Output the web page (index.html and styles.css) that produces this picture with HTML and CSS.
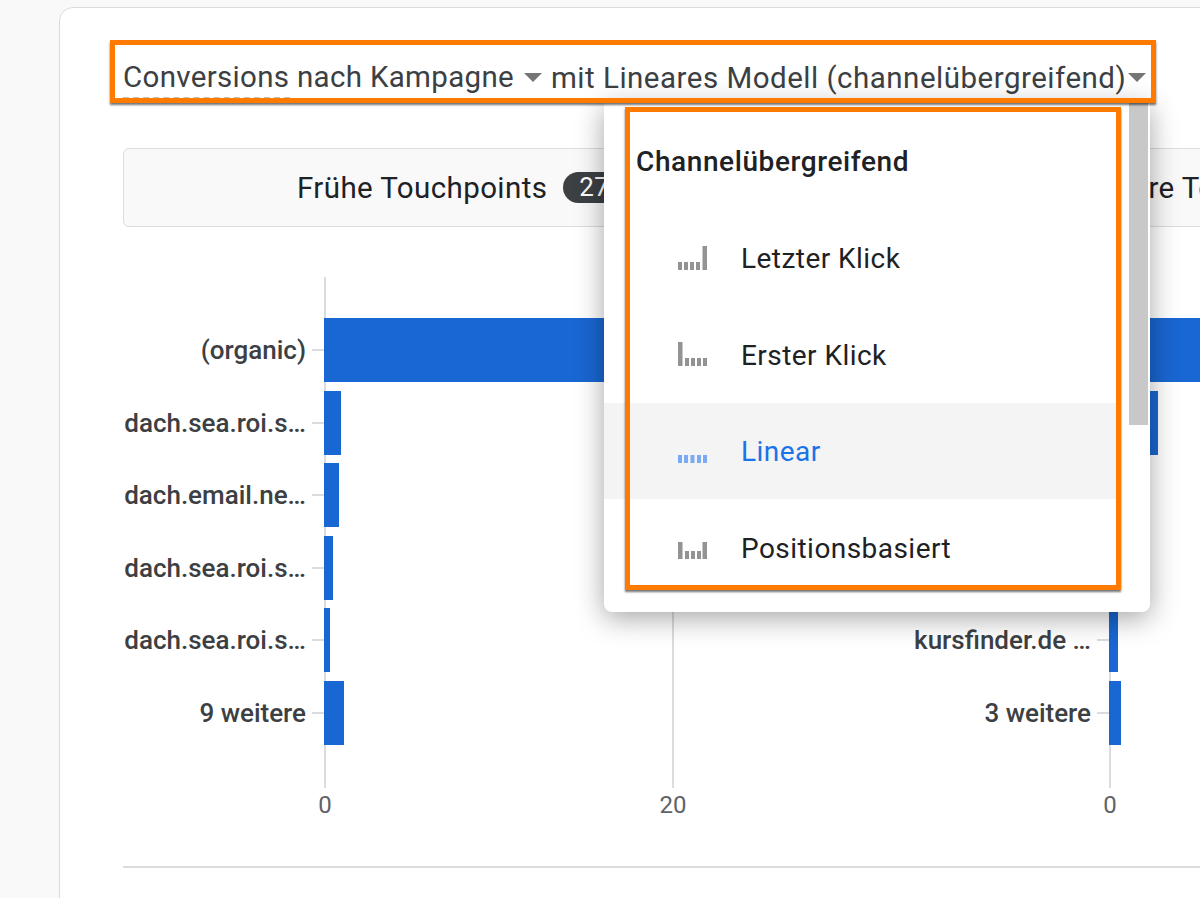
FILE: index.html
```html
<!DOCTYPE html>
<html lang="de">

<head>
    <meta charset="UTF-8">
    <meta name="viewport" content="width=device-width, initial-scale=1.0">
    <title>Conversions nach Kampagne</title>
    <link rel="stylesheet" href="styles.css">
</head>

<body>
    <div class="card">
        <div class="card-title">
            <span class="title-dim">Conversions nach Kampagne</span>
            <span class="caret"></span>
            <span class="title-model">mit Lineares Modell (channelübergreifend)</span>
            <span class="caret caret-end"></span>
        </div>

        <div class="segments">
            <div class="segment">
                <span>Frühe Touchpoints</span>
                <span class="badge">27 %</span>
            </div>
            <div class="segment segment-late">
                <span>Spätere Touchpoints</span>
            </div>
        </div>

        <div class="charts">
            <div class="chart">
                <div class="gridline" style="left: 201px"><span class="axis-label">0</span></div>
                <div class="gridline" style="left: 549px"><span class="axis-label">20</span></div>
                <div class="row"><span class="row-label">(organic)</span><span class="row-tick"></span><span class="bar" style="width: 500px"></span></div>
                <div class="row"><span class="row-label">dach.sea.roi.s…</span><span class="row-tick"></span><span class="bar" style="width: 17px"></span></div>
                <div class="row"><span class="row-label">dach.email.ne…</span><span class="row-tick"></span><span class="bar" style="width: 15px"></span></div>
                <div class="row"><span class="row-label">dach.sea.roi.s…</span><span class="row-tick"></span><span class="bar" style="width: 9px"></span></div>
                <div class="row"><span class="row-label">dach.sea.roi.s…</span><span class="row-tick"></span><span class="bar" style="width: 6px"></span></div>
                <div class="row"><span class="row-label">9 weitere</span><span class="row-tick"></span><span class="bar" style="width: 20px"></span></div>
            </div>
            <div class="chart">
                <div class="gridline" style="left: 201px"><span class="axis-label">0</span></div>
                <div class="row"><span class="row-label"></span><span class="row-tick"></span><span class="bar" style="width: 300px"></span></div>
                <div class="row"><span class="row-label"></span><span class="row-tick"></span><span class="bar" style="width: 49px"></span></div>
                <div class="row"><span class="row-label"></span><span class="row-tick"></span><span class="bar" style="width: 20px"></span></div>
                <div class="row"><span class="row-label"></span><span class="row-tick"></span><span class="bar" style="width: 12px"></span></div>
                <div class="row"><span class="row-label">kursfinder.de …</span><span class="row-tick"></span><span class="bar" style="width: 9px"></span></div>
                <div class="row"><span class="row-label">3 weitere</span><span class="row-tick"></span><span class="bar" style="width: 12px"></span></div>
            </div>
        </div>

        <div class="divider"></div>

        <!-- Model dropdown -->
        <div class="menu">
            <div class="menu-heading">Channelübergreifend</div>
            <div class="menu-item">
                <svg class="model-icon" viewBox="0 0 29 24"><rect x="0" y="16" width="4" height="8"/><rect x="6" y="16" width="4" height="8"/><rect x="12" y="16" width="4" height="8"/><rect x="18" y="16" width="4" height="8"/><rect x="24.5" y="0" width="4.5" height="24"/></svg>
                <span>Letzter Klick</span>
            </div>
            <div class="menu-item">
                <svg class="model-icon" viewBox="0 0 29 24"><rect x="0" y="0" width="4.5" height="24"/><rect x="7" y="16" width="4" height="8"/><rect x="13" y="16" width="4" height="8"/><rect x="19" y="16" width="4" height="8"/><rect x="25" y="16" width="4" height="8"/></svg>
                <span>Erster Klick</span>
            </div>
            <div class="menu-item menu-item-active">
                <svg class="model-icon" viewBox="0 0 29 24"><rect x="0" y="16" width="4" height="8"/><rect x="6" y="16" width="4" height="8"/><rect x="12.5" y="16" width="4" height="8"/><rect x="19" y="16" width="4" height="8"/><rect x="25" y="16" width="4" height="8"/></svg>
                <span>Linear</span>
            </div>
            <div class="menu-item">
                <svg class="model-icon" viewBox="0 0 29 24"><rect x="0" y="7" width="4.5" height="17"/><rect x="7" y="16" width="4" height="8"/><rect x="13" y="16" width="4" height="8"/><rect x="19" y="16" width="4" height="8"/><rect x="24.5" y="7" width="4.5" height="17"/></svg>
                <span>Positionsbasiert</span>
            </div>
            <div class="menu-scrollbar"></div>
        </div>

        <!-- Highlight boxes -->
        <div class="highlight highlight-title"></div>
        <div class="highlight highlight-menu"></div>
    </div>
</body>

</html>
```

FILE: styles.css
```css
* {
    box-sizing: border-box;
}

body {
    margin: 0;
    height: 898px;
    overflow: hidden;
    padding: 7px 0 0 59px;
    background-color: #f9f9f9;
    font-family: Roboto, "Liberation Sans", sans-serif;
    color: #3c4043;
}

.card {
    position: relative;
    width: 1400px;
    height: 1000px;
    padding: 49px 0 0 63px;
    background-color: #fff;
    border: 1px solid #dadce0;
    border-radius: 14px;
}

.card-title {
    display: flex;
    align-items: center;
    height: 41px;
    font-size: 29.5px;
    letter-spacing: 0.32px;
    white-space: nowrap;
}

.title-dim {
    position: relative;
    line-height: 41px;
}

.title-dim::after {
    content: "";
    position: absolute;
    left: 0;
    bottom: -1px;
    width: 167px;
    border-bottom: 2px dashed #bdc1c6;
}

.title-model {
    margin-left: 9px;
    letter-spacing: 0.5px;
}

.caret {
    width: 0;
    height: 0;
    margin-left: 10px;
    border-left: 9.5px solid transparent;
    border-right: 9.5px solid transparent;
    border-top: 9px solid #757575;
}

.caret-end {
    margin-left: 2px;
}

.segments {
    display: flex;
    width: 1300px;
    height: 79px;
    margin-top: 50px;
    background-color: #f9f9f9;
    border: 1px solid #dadce0;
    border-radius: 6px;
    font-size: 29.5px;
    letter-spacing: 0.4px;
    color: #202124;
}

.segment {
    flex: none;
    display: flex;
    align-items: center;
    gap: 16px;
    width: 674px;
    padding-left: 173px;
    white-space: nowrap;
}

.segment-late {
    width: 620px;
    padding-left: 273px;
}

.badge {
    height: 31px;
    padding: 0 16px;
    line-height: 31px;
    border-radius: 16px;
    background-color: #3c4043;
    color: #fff;
    font-size: 26px;
}

.charts {
    display: flex;
    height: 511px;
    margin-top: 50px;
}

.chart {
    position: relative;
    flex: none;
    display: flex;
    flex-direction: column;
    gap: 8.6px;
    width: 785px;
    padding-top: 41px;
}

.gridline {
    position: absolute;
    top: 0;
    bottom: 0;
    width: 2px;
    background-color: #dadce0;
}

.axis-label {
    position: absolute;
    top: 100%;
    left: 1px;
    margin-top: 3px;
    transform: translateX(-50%);
    font-size: 24px;
    color: #5f6368;
}

.row {
    position: relative;
    display: flex;
    align-items: center;
    height: 64px;
}

.row-label {
    flex: none;
    width: 183px;
    font-size: 26px;
    font-weight: 500;
    text-align: right;
    white-space: nowrap;
}

.row-tick {
    flex: none;
    width: 12px;
    height: 2px;
    margin: 0 0 0 6px;
    background-color: #dadce0;
}

.bar {
    flex: none;
    height: 64px;
    background-color: #1967d2;
}

.divider {
    width: 1300px;
    height: 2px;
    margin-top: 78px;
    background-color: #dadce0;
}

.menu {
    position: absolute;
    top: 94px;
    left: 544px;
    width: 546px;
    height: 510px;
    padding-top: 40px;
    background-color: #fff;
    border-radius: 0 0 8px 8px;
    box-shadow: 0 6px 28px rgba(0, 0, 0, 0.36);
    font-size: 28px;
    letter-spacing: 0.45px;
    color: #202124;
}

.menu-heading {
    height: 40px;
    padding-left: 32px;
    line-height: 40px;
    font-weight: 500;
    letter-spacing: 0.6px;
}

.menu-item {
    display: flex;
    align-items: center;
    gap: 34px;
    height: 96.5px;
    padding-left: 74px;
}

.menu-item span {
    padding-top: 2px;
}

.menu-heading + .menu-item {
    margin-top: 27.5px;
}

.menu-item-active {
    width: 514px;
    background-color: #f4f4f4;
    color: #1a73e8;
}

.model-icon {
    flex: none;
    width: 29px;
    height: 24px;
    fill: #939393;
}

.menu-item-active .model-icon {
    fill: #7baaf7;
}

.menu-scrollbar {
    position: absolute;
    top: 0;
    right: 2px;
    width: 19px;
    height: 323px;
    background-color: #c8c8c8;
}

.highlight {
    position: absolute;
    border: 5px solid #ff7a00;
    box-shadow: 0 2px 2px rgba(0, 0, 0, 0.55);
}

.highlight-title {
    top: 32px;
    left: 50px;
    width: 1046px;
    height: 63px;
}

.highlight-menu {
    top: 99px;
    left: 565px;
    width: 496px;
    height: 483px;
}
```
